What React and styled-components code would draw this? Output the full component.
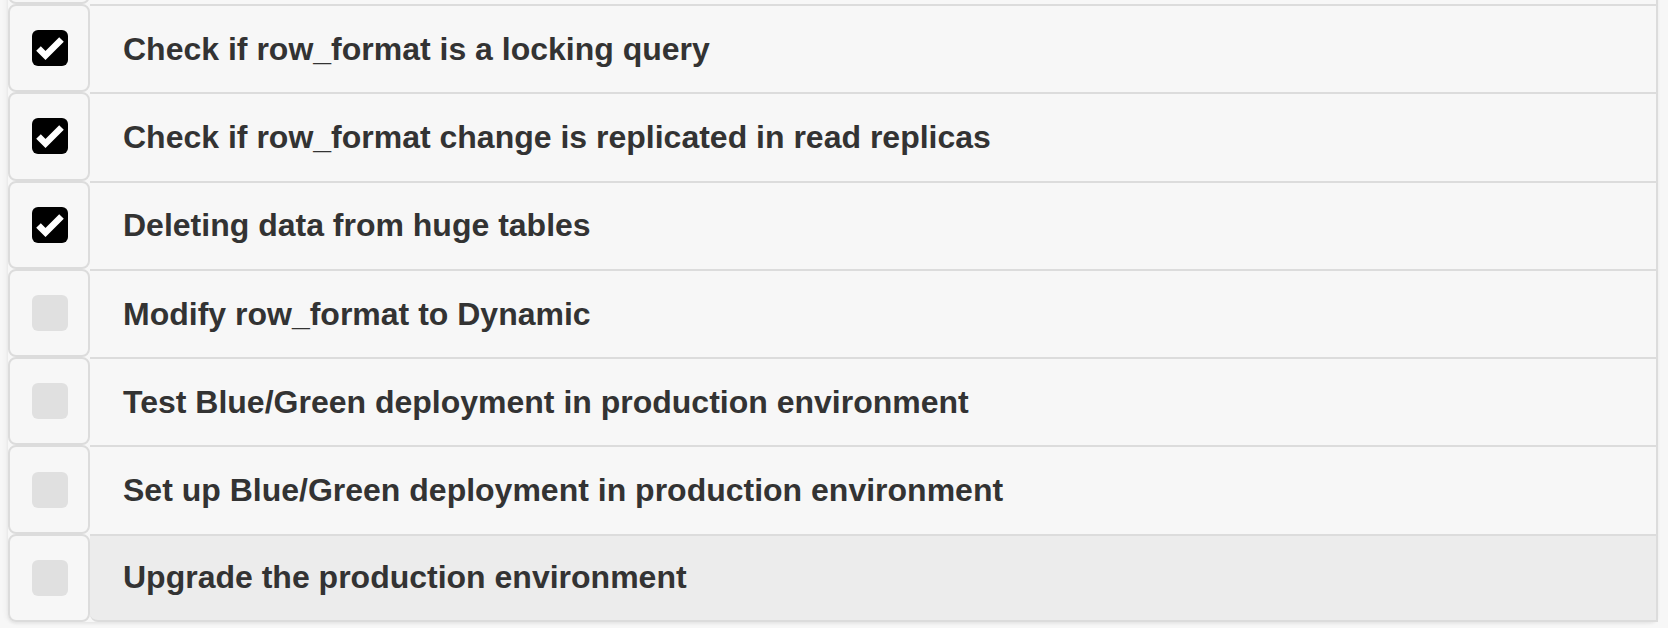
import styled, { createGlobalStyle } from "styled-components";

const GlobalStyle = createGlobalStyle`
  html, body {
    margin: 0;
    padding: 0;
    background: #f7f7f7;
    overflow: hidden;
  }
  body {
    font-family: "Liberation Sans", Arial, Helvetica, sans-serif;
  }
`;

const Page = styled.div`
  width: 1668px;
  height: 628px;
  overflow: hidden;
  padding: 0 10px 0 8px;
  box-sizing: border-box;
`;

const List = styled.ul`
  list-style: none;
  margin: -84.3px 0 0 0;
  padding: 0;
  border-radius: 8px;
  box-shadow: 0 2px 3px rgba(0, 0, 0, 0.06), -3px 0 4px rgba(0, 0, 0, 0.03);
`;

const Row = styled.li`
  display: flex;
  height: 88.3px;
`;

const Addon = styled.div`
  flex: 0 0 82px;
  box-sizing: border-box;
  border: 2px solid #dcdcdc;
  border-radius: 8px;
  background: #f7f7f7;
  display: flex;
  align-items: center;
  justify-content: center;
  padding-left: 2px;
`;

const Label = styled.div`
  flex: 1;
  box-sizing: border-box;
  border-top: 2px solid #dcdcdc;
  border-right: 2px solid #dcdcdc;
  border-bottom: ${(p) => (p.$last ? "2px solid #dcdcdc" : "none")};
  border-bottom-left-radius: ${(p) => (p.$last ? "8px" : "0")};
  background: ${(p) => (p.$active ? "#ececec" : "#f7f7f7")};
  display: flex;
  align-items: center;
  padding: 0 0 0 33px;
  font-size: 32px;
  font-weight: 700;
  color: #333;
  white-space: nowrap;
`;

const Box = styled.span`
  width: 36px;
  height: 36px;
  border-radius: 6px;
  background: ${(p) => (p.$checked ? "#000" : "#e0e0e0")};
  display: flex;
  align-items: center;
  justify-content: center;
`;

function Check({ checked }) {
  return (
    <Box $checked={checked}>
      {checked && (
        <svg width="36" height="36" viewBox="0 0 36 36">
          <path
            d="M6.5 18.5 L13.5 25.5 L29.5 9.5"
            fill="none"
            stroke="#fff"
            strokeWidth="6.5"
            strokeLinejoin="miter"
          />
        </svg>
      )}
    </Box>
  );
}

const tasks = [
  { text: "", done: true },
  { text: "Check if row_format is a locking query", done: true },
  { text: "Check if row_format change is replicated in read replicas", done: true },
  { text: "Deleting data from huge tables", done: true },
  { text: "Modify row_format to Dynamic", done: false },
  { text: "Test Blue/Green deployment in production environment", done: false },
  { text: "Set up Blue/Green deployment in production environment", done: false },
  { text: "Upgrade the production environment", done: false },
];

export default function App() {
  return (
    <>
      <GlobalStyle />
      <Page>
        <List>
          {tasks.map((t, i) => {
            const last = i === tasks.length - 1;
            return (
              <Row key={i}>
                <Addon>
                  <Check checked={t.done} />
                </Addon>
                <Label $last={last} $active={last}>
                  {t.text}
                </Label>
              </Row>
            );
          })}
        </List>
      </Page>
    </>
  );
}
